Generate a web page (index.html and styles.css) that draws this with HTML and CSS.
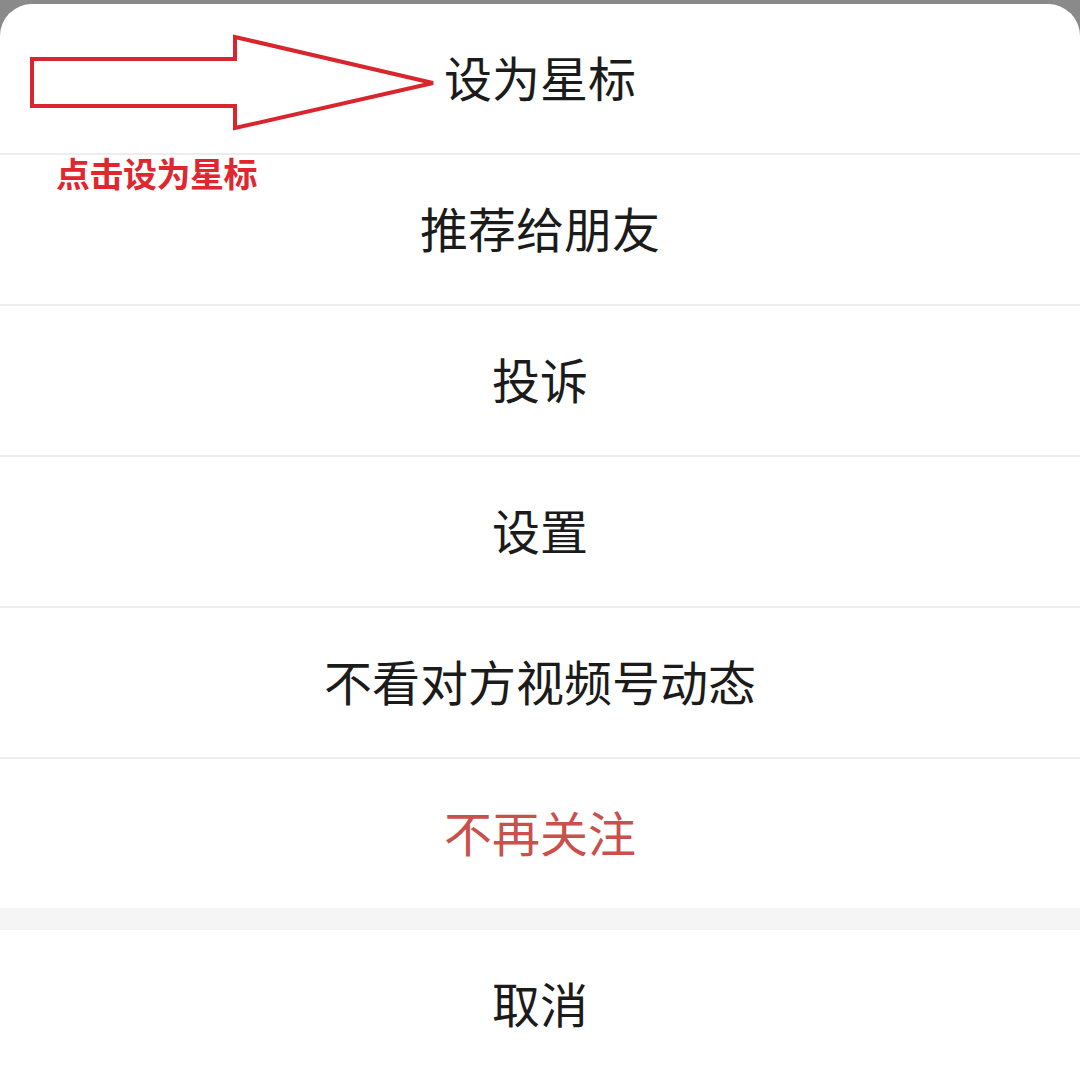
FILE: index.html
```html
<!DOCTYPE html>
<html lang="zh-CN">
<head>
    <meta charset="UTF-8">
    <meta name="viewport" content="width=device-width, initial-scale=1.0">
    <title>操作菜单</title>
    <link rel="stylesheet" href="styles.css">
</head>
<body>
    <div class="sheet">
        <div class="menu">
            <div class="menu-item">设为星标</div>
            <div class="menu-item">推荐给朋友</div>
            <div class="menu-item">投诉</div>
            <div class="menu-item">设置</div>
            <div class="menu-item">不看对方视频号动态</div>
            <div class="menu-item danger">不再关注</div>
        </div>
        <div class="menu-gap"></div>
        <div class="menu-item cancel">取消</div>

        <!-- annotation drawn over the screenshot -->
        <svg class="arrow" width="460" height="140" viewBox="0 0 460 140">
            <polygon points="32,59 235,59 235,37 433,83 235,128 235,106 32,106"
                     fill="none" stroke="#d9252e" stroke-width="4" stroke-linejoin="miter"/>
        </svg>
        <div class="note">点击设为星标</div>
    </div>
</body>
</html>
```

FILE: styles.css
```css
body {
    margin: 0;
    background-color: #8a8a8a;
    font-family: "Noto Sans CJK SC", "Noto Sans", sans-serif;
    overflow: hidden;
}
.sheet {
    position: relative;
    margin-top: 4px;
    height: 1084px;
    background-color: #fff;
    border-radius: 32px 32px 0 0;
}
.menu {
    display: flex;
    flex-direction: column;
}
.menu-item {
    box-sizing: border-box;
    height: 151px;
    padding-bottom: 6px;
    display: flex;
    align-items: center;
    justify-content: center;
    font-size: 48px;
    color: #1b1b1b;
    border-bottom: 2px solid #ededed;
}
.menu-item:last-child {
    height: 149px;
    border-bottom: none;
}
.menu-item.danger {
    color: #c9504b;
}
.menu-gap {
    height: 22px;
    background-color: #f5f5f5;
}
.menu-item.cancel {
    height: 150px;
    border-bottom: none;
}
.arrow {
    position: absolute;
    left: 0;
    top: -4px;
}
.note {
    position: absolute;
    left: 56px;
    top: 144px;
    font-size: 34px;
    font-weight: bold;
    color: #e0262e;
    letter-spacing: -0.5px;
}
```
